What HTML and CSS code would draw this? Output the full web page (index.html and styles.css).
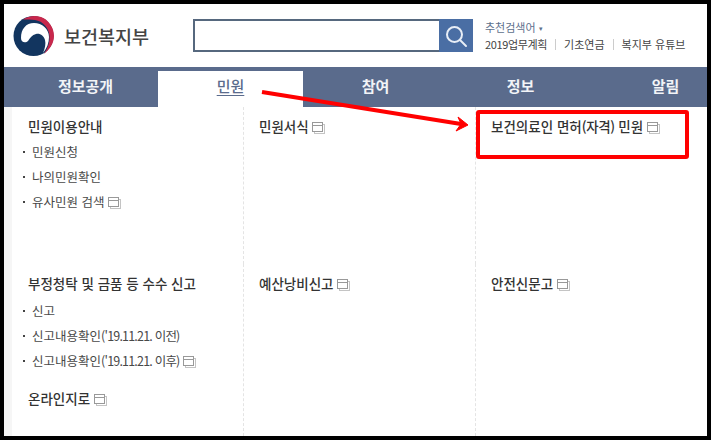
FILE: index.html
```html
<!DOCTYPE html>
<html lang="ko">
<head>
    <meta charset="UTF-8">
    <title>보건복지부 민원</title>
    <link rel="stylesheet" href="styles.css">
</head>
<body>
    <svg class="defs" width="0" height="0">
        <symbol id="win" viewBox="0 0 13 12">
            <rect x="2.5" y="2.5" width="10" height="9" fill="none" stroke="#c4c4c4"/>
            <rect x="0.5" y="0.5" width="10" height="9" fill="#fff" stroke="#999"/>
            <path d="M1 3.5h9" stroke="#999"/>
        </symbol>
    </svg>
    <div class="page">
        <header class="top">
            <a class="logo">
                <svg class="logo-mark" width="42" height="42" viewBox="0 0 42 42">
                    <circle cx="20.5" cy="21" r="20" fill="#12355f"/>
                    <path d="M8 23C8 14 13 8 21 8C29 8 36 14 36 22C36 28 34 33 30 38C32 33 33 29 32 25C31 21 27 18 23 19C19 20 17 23 15 26C13 28 8 28 8 23Z" fill="#fff"/>
                    <path d="M10 4.5C15 1 22 0 28 2C36 5 41 13 41 21C41 28 37 34 31 39C35 33 37 27 36.5 21C36 13 30 6 22 5C18 4.5 14 4.5 10 4.5Z" fill="#c8284c"/>
                </svg>
                <span class="logo-name">보건복지부</span>
            </a>
            <form class="search">
                <input class="search-input" type="text">
                <button class="search-btn" type="button">
                    <svg width="24" height="24" viewBox="0 0 24 24" fill="none" stroke="#e8eef6" stroke-width="2">
                        <circle cx="10.5" cy="10.5" r="7.5"/>
                        <path d="M16 16l6 6" stroke-linecap="round"/>
                    </svg>
                </button>
            </form>
            <div class="keywords">
                <p class="keywords-title">추천검색어 <span class="caret">▾</span></p>
                <p class="keywords-links"><a class="tight">2019업무계획</a><i></i><a>기초연금</a><i></i><a>복지부 유튜브</a></p>
            </div>
        </header>

        <nav class="nav">
            <a>정보공개</a>
            <a class="active">민원</a>
            <a>참여</a>
            <a>정보</a>
            <a>알림</a>
        </nav>

        <main class="menu">
            <section class="cell">
                <h2>민원이용안내</h2>
                <ul>
                    <li>민원신청</li>
                    <li>나의민원확인</li>
                    <li>유사민원 검색 <svg class="win"><use href="#win"/></svg></li>
                </ul>
            </section>
            <section class="cell">
                <h2>민원서식 <svg class="win"><use href="#win"/></svg></h2>
            </section>
            <section class="cell">
                <h2>보건의료인 면허<span class="paren">(자격)</span> 민원 <svg class="win"><use href="#win"/></svg></h2>
            </section>
            <section class="cell">
                <h2>부정청탁 및 금품 등 수수 신고</h2>
                <ul class="report-list">
                    <li>신고</li>
                    <li>신고내용확인<span class="date">('19.11.21. 이전)</span></li>
                    <li>신고내용확인<span class="date">('19.11.21. 이후)</span> <svg class="win"><use href="#win"/></svg></li>
                </ul>
                <h2 class="extra">온라인지로 <svg class="win"><use href="#win"/></svg></h2>
            </section>
            <section class="cell">
                <h2>예산낭비신고 <svg class="win"><use href="#win"/></svg></h2>
            </section>
            <section class="cell">
                <h2>안전신문고 <svg class="win"><use href="#win"/></svg></h2>
            </section>
        </main>

        <svg class="callout" width="703" height="432" viewBox="0 0 703 432">
            <path d="M258 88L457 120" stroke="#f00" stroke-width="4" fill="none"/>
            <path d="M464 121L454 113L457 120L452 127Z" fill="#f00" stroke="#f00" stroke-width="1"/>
            <rect x="474" y="108" width="209" height="45" rx="1" fill="none" stroke="#f00" stroke-width="4"/>
        </svg>
    </div>
</body>
</html>
```

FILE: styles.css
```css
:root {
    --nav-color: #5a6b8c;
    --text-color: #3a3a3a;
}

* {
    margin: 0;
    padding: 0;
    box-sizing: border-box;
}

html, body {
    height: 440px;
    overflow: hidden;
}

body {
    background: #000;
    padding: 4px;
    font-family: "Noto Sans CJK KR", "Noto Sans", sans-serif;
    color: var(--text-color);
}

.defs {
    position: absolute;
}

.page {
    position: relative;
    width: 703px;
    height: 432px;
    background: #fff;
    overflow: hidden;
}

.callout {
    position: absolute;
    left: 0;
    top: 0;
}

/* header */
.top {
    height: 63px;
    display: flex;
    align-items: flex-start;
}

.logo {
    display: flex;
    align-items: center;
    gap: 9px;
    margin: 11px 0 0 9px;
    width: 180px;
}

.logo-name {
    font-size: 18.5px;
    font-weight: 500;
    color: #444;
    line-height: 42px;
}

.search {
    display: flex;
    width: 280px;
    height: 33px;
    margin-top: 15px;
}

.search-input {
    width: 246px;
    height: 33px;
    border: 2px solid #56687e;
    border-right: 0;
    background: #fff;
}

.search-btn {
    width: 34px;
    height: 33px;
    border: none;
    background: #4a6ea4;
    display: flex;
    align-items: center;
    justify-content: center;
}

.keywords {
    margin: 15px 0 0 12px;
    font-size: 11px;
    line-height: 16px;
}

.keywords-title {
    color: #5d6f8c;
}

.caret {
    font-size: 7px;
    vertical-align: 1px;
}

.keywords-links {
    display: flex;
    align-items: center;
    white-space: nowrap;
    color: #444;
}

.keywords-links i {
    width: 1px;
    height: 11px;
    margin: 0 8px;
    background: #ccc;
}

.tight {
    letter-spacing: -0.35px;
}

/* nav */
.nav {
    height: 40px;
    background: var(--nav-color);
    padding-left: 9px;
    display: flex;
    overflow: hidden;
}

.nav a {
    flex: 0 0 145px;
    text-align: center;
    font-size: 15px;
    font-weight: 700;
    line-height: 38px;
    color: #f2f4f7;
}

.nav a.active {
    margin-top: 4px;
    line-height: 30px;
    height: 36px;
    background: #fff;
    color: #5a6b8c;
    font-weight: 500;
    text-decoration: underline;
    text-underline-offset: 3px;
}

/* menu */
.menu {
    display: grid;
    grid-template-columns: 231px 232px 232px;
    grid-template-rows: 157px 172px;
    margin-left: 8px;
    box-shadow: -8px 0 0 #f6f6f6;
}

.cell {
    padding: 9px 0 0 15px;
    border-left: 1px dashed #e4e4e4;
}

.cell:nth-child(3n+1) {
    padding-left: 16px;
    border-left: none;
}

h2 {
    font-size: 13.5px;
    font-weight: 500;
    line-height: 20px;
    color: #333;
    white-space: nowrap;
}

h2.extra {
    margin-top: 15px;
}

.paren {
    letter-spacing: -0.4px;
}

ul {
    list-style: none;
    margin-top: 3px;
}

.report-list {
    margin-top: 5px;
}

li {
    position: relative;
    padding-left: 4px;
    font-size: 12.5px;
    line-height: 25px;
    color: #484848;
    white-space: nowrap;
}

li::before {
    content: "";
    position: absolute;
    left: -5px;
    top: 12px;
    width: 2px;
    height: 2px;
    background: #444;
}

.date {
    letter-spacing: -0.8px;
}

.win {
    width: 13px;
    height: 12px;
    vertical-align: -2px;
}
```
